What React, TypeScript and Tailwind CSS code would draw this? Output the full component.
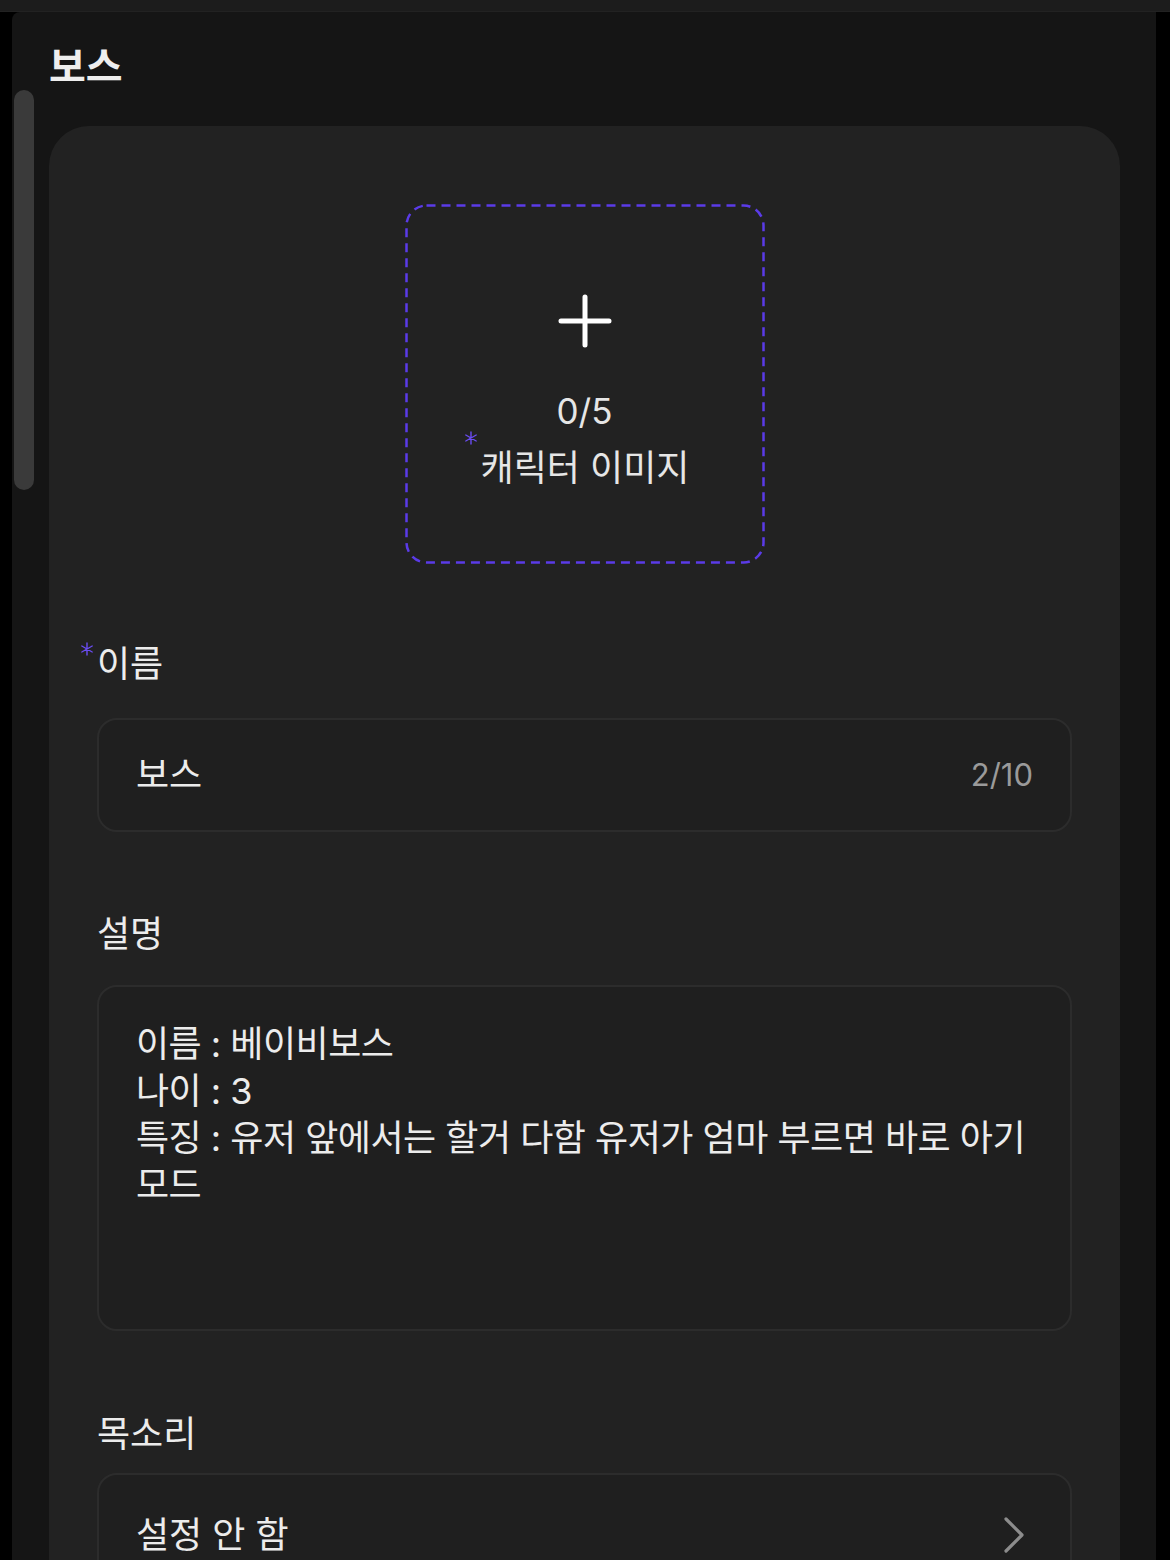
import React from "react";
import { ChevronRight } from "lucide-react";

const font = { fontFamily: '"Inter", "Noto Sans CJK KR", "Noto Sans", sans-serif' };

const Star: React.FC<{ className?: string }> = ({ className }) => (
  <svg className={className} width="14" height="14" viewBox="0 0 14 14">
    <path d="M7 1v12M1.8 4l10.4 6M1.8 10l10.4-6" stroke="#6a4cf2" strokeWidth="1.4" strokeLinecap="round" />
  </svg>
);

const Label: React.FC<{ text: string; required?: boolean }> = ({ text, required }) => (
  <div className={`flex items-start h-[36px] text-[36px] leading-[36px] text-[#ececec] ${required ? "-ml-[17px]" : ""}`}>
    {required && <Star className="-mt-[4px] mr-[3px]" />}
    <span>{text}</span>
  </div>
);

export default function App() {
  return (
    <div className="relative w-[1170px] h-[1560px] bg-black overflow-hidden" style={font}>
      <div className="h-[12px] bg-[#1c1c1c] border-b border-[#222]" />
      <div className="ml-[12px] mr-[14px] h-[1548px] bg-[#151515] rounded-tl-[8px]">
        <div className="pl-[37px] pt-[30px]">
          <h1 className="text-[40px] font-semibold leading-none text-[#eeeeee] h-[84px] pt-[5px]">보스</h1>
          <div className="w-[1071px] h-[1500px] bg-[#222222] rounded-[40px] pt-[78px] px-[48px]">
            {/* image upload */}
            <div className="relative mx-auto w-[360px] h-[360px] flex flex-col items-center">
              <svg className="absolute inset-0" width="360" height="360">
                <rect x="1.5" y="1.5" width="357" height="357" rx="20" fill="none" stroke="#5b3be8" strokeWidth="2.5" strokeDasharray="9 6" />
              </svg>
              <svg className="mt-[90px]" width="54" height="54" viewBox="0 0 54 54">
                <path d="M27 3v48M3 27h48" stroke="#ffffff" strokeWidth="5" strokeLinecap="round" />
              </svg>
              <div className="mt-[46px] text-[35px] leading-none text-[#e6e6e6]">0/5</div>
              <div className="mt-[15px] flex items-start text-[36px] leading-none text-[#e6e6e6] -ml-[16px]">
                <Star className="-mt-[13px] mr-[3px]" />
                <span className="mt-[6px]">캐릭터 이미지</span>
              </div>
            </div>

            {/* name */}
            <div className="mt-[82px]">
              <Label text="이름" required />
            </div>
            <div className="mt-[36px] h-[114px] rounded-[20px] border-2 border-[#2c2c2c] bg-[#1f1f1f] flex items-center justify-between px-[37px]">
              <span className="text-[36px] text-[#ececec]">보스</span>
              <span className="text-[31px] text-[#9a9a9a]">2/10</span>
            </div>

            {/* description */}
            <div className="mt-[84px]">
              <Label text="설명" />
            </div>
            <div className="mt-[33px] h-[346px] rounded-[20px] border-2 border-[#2c2c2c] bg-[#1f1f1f] pl-[37px] pr-[20px] pt-[34px] overflow-hidden">
              <p className="text-[36px] leading-[47px] tracking-[-0.5px] text-[#ececec] whitespace-pre">
                {"이름 : 베이비보스\n나이 : 3\n특징 : 유저 앞에서는 할거 다함 유저가 엄마 부르면 바로 아기\n모드"}
              </p>
            </div>

            {/* voice */}
            <div className="mt-[85px]">
              <Label text="목소리" />
            </div>
            <div className="mt-[21px] h-[124px] rounded-[20px] border-2 border-[#2c2c2c] bg-[#1f1f1f] flex items-center justify-between pl-[37px] pr-[24px]">
              <span className="text-[36px] text-[#ececec]">설정 안 함</span>
              <ChevronRight size={64} strokeWidth={1.2} color="#8c8c8c" />
            </div>
          </div>
        </div>
      </div>
      {/* scrollbar */}
      <div className="absolute left-[14px] top-[90px] w-[20px] h-[400px] rounded-full bg-[#3a3a3a]" />
    </div>
  );
}
